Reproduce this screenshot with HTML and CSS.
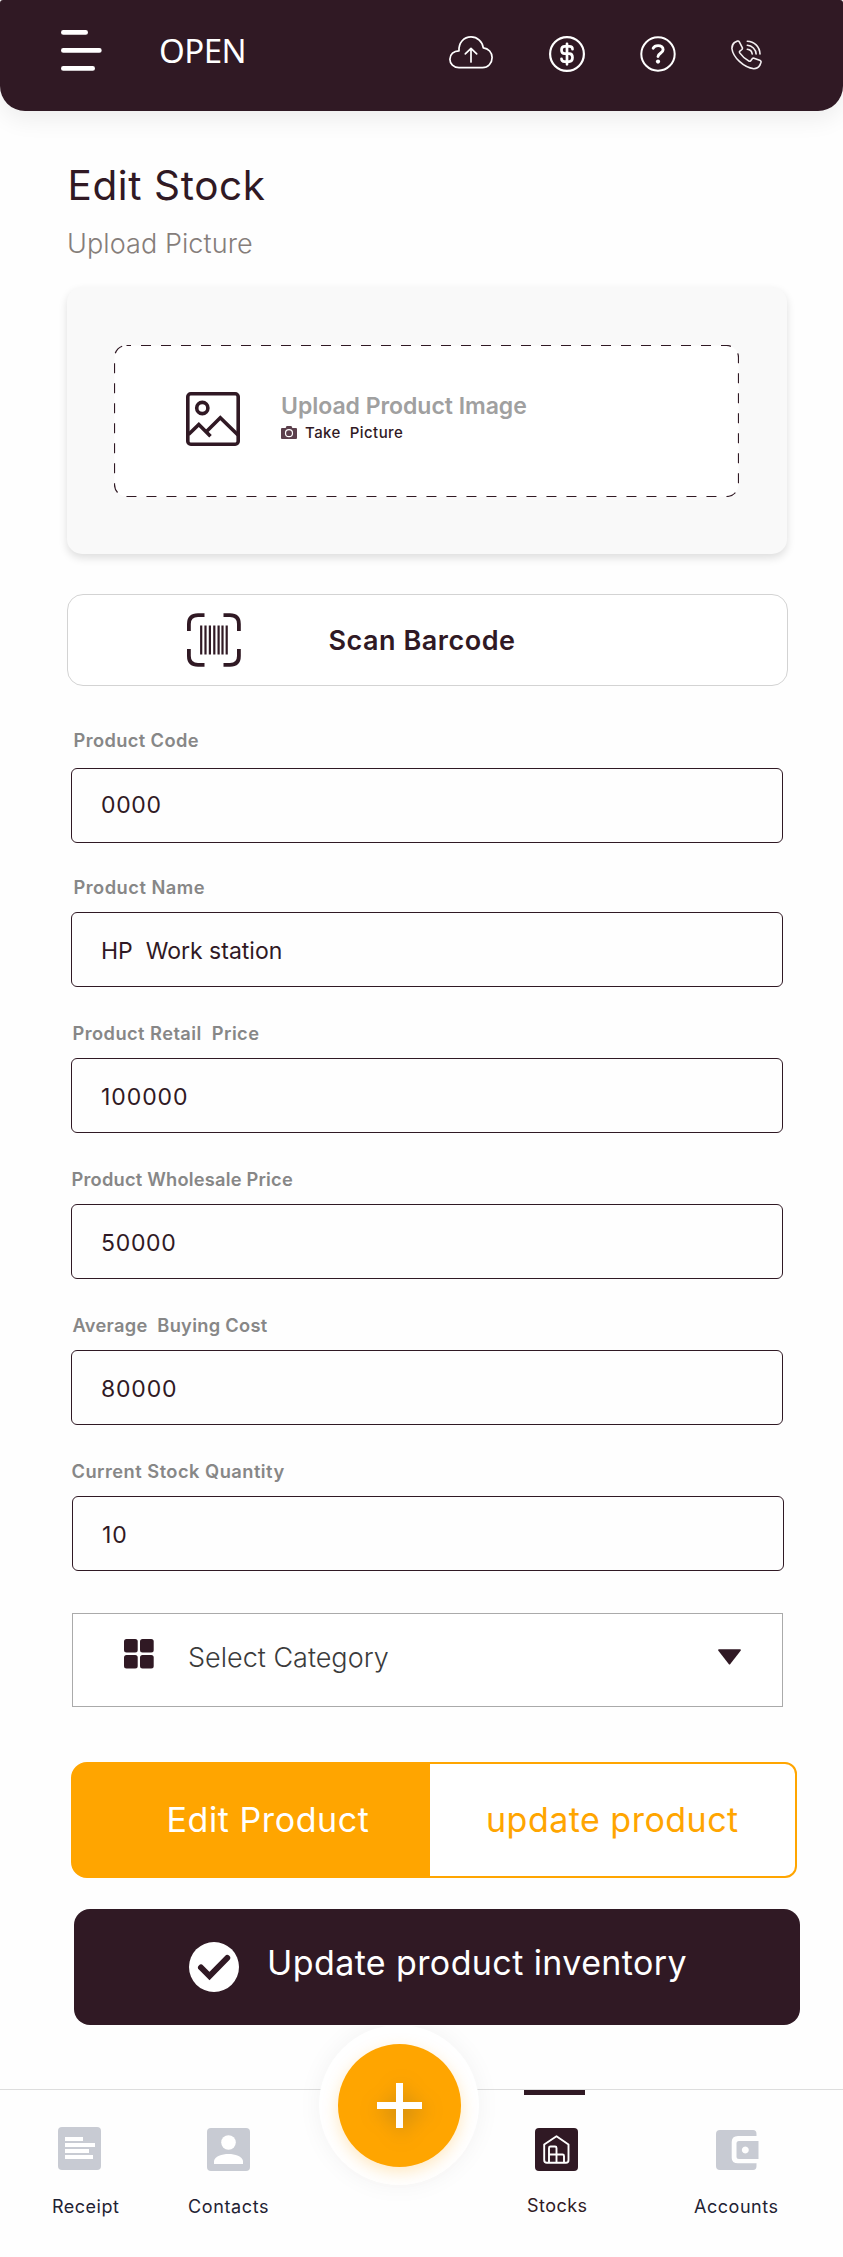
FILE: index.html
```html
<!DOCTYPE html>
<html lang="en">
<head>
<meta charset="utf-8">
<title>Edit Stock</title>
<link rel="stylesheet" href="styles.css">
</head>
<body>
<header class="topbar">
  <svg class="menu" width="41" height="41" viewBox="0 0 41 41" stroke="#fff" stroke-width="4.6" stroke-linecap="round"><path d="M2.3 2.4H24.7M2.3 20.4H38.4M2.3 38.4H31.7"/></svg>
  <span class="brand">OPEN</span>
  <nav class="tools">
    <svg class="t-cloud" width="44" height="33" viewBox="0 0 44 33" fill="none" stroke="#fff" stroke-width="1.7" stroke-linecap="round" stroke-linejoin="round"><path d="M10 31.7C4.500 31.700 .9 27.800 .9 23.200C.9 18.300 4.800 14.800 10 14.800C9.500 6.500 15 .9 22 .9C28.500 .9 33.500 5.600 34.300 11.800C39.500 12.300 43.100 16.500 43.100 21.500C43.100 27.300 39 31.700 33.500 31.700Z"/><path d="M22 26V12.500M16.300 17.800L22 12.300L27.700 17.800"/></svg>
    <svg class="t-dollar" width="36" height="36" viewBox="0 0 36 36" fill="none" stroke="#fff"><circle cx="18" cy="18" r="16.900" stroke-width="2.200"/><path d="M23.500 13.200C23.500 11.300 22.100 10.400 20.300 10.400H15.800C13.700 10.400 12.500 11.800 12.500 14S13.700 17.700 15.800 17.700H20.200C22.300 17.700 23.500 19.200 23.500 21.600S22.300 25.600 20.200 25.600H15.500C13.600 25.600 12.500 24.600 12.500 22.800M18 7.800V28.300" stroke-width="2.700" stroke-linecap="round"/></svg>
    <svg class="t-help" width="36" height="36" viewBox="0 0 36 36" fill="none" stroke="#fff"><circle cx="18" cy="18" r="16.700" stroke-width="2"/><path d="M13.200 12.200C14.100 10.300 15.900 9.600 18.100 9.600C21 9.600 23.100 11.200 23.100 13.700C23.100 17.200 18 17.200 18 20.500" stroke-width="2.900" stroke-linecap="round"/><circle cx="18" cy="25.600" r="2.100" fill="#fff" stroke="none"/></svg>
    <svg class="t-phone" width="31" height="30" viewBox="0 0 31 30" fill="none" stroke="#f4f0f2" stroke-width="1.600" stroke-linecap="round" stroke-linejoin="round"><path d="M3.500 2.500L6.500 1Q7.700 .7 8.300 1.900L11.300 7.600Q11.700 8.700 10.900 9.500L8.600 11.400Q8.300 12.100 8.700 12.900C11.200 16.500 14.400 19.300 18.200 21.200Q19 21.500 19.600 20.900L21.400 18.600Q22 17.900 23 18.200L29.300 20.600Q30.300 21.200 30 22.300L29 25Q27 28.700 22.800 28.700C12.500 27.500 2 17.300 .9 8.500Q.9 4.500 3.500 2.500Z"/><path d="M16.300 1.200C23.200 1.400 28.700 6.600 29 14M16.300 5.300C21 5.500 24.900 9.400 25.100 14M16.300 9.300C19.100 9.600 20.900 11.500 21.200 14"/></svg>
  </nav>
</header>

<main class="page">
  <h1 class="title">Edit Stock</h1>
  <p class="subtitle">Upload Picture</p>

  <section class="upload">
    <div class="drop">
      <svg class="dash" width="625" height="152" viewBox="0 0 625 152"><rect x=".5" y=".5" width="624" height="151" rx="12" fill="#fff" stroke="#301924" stroke-width="1.200" stroke-dasharray="10 10" stroke-dashoffset="5.500"/></svg>
      <svg class="pic" width="54" height="54" viewBox="0 0 54 54" fill="none" stroke="#301924" stroke-width="3.600"><rect x="1.800" y="1.800" width="50.400" height="50.400" rx="3"/><circle cx="16.300" cy="16" r="5.600"/><path d="M2.500 42.500L12.800 32.500L24.500 44.300M20.500 39.500L34.300 25.800L52 43"/></svg>
      <div class="drop-text">
        <span class="drop-title">Upload Product Image</span>
        <span class="take"><svg width="16" height="13" viewBox="0 0 16 13"><path fill="#5b3f4c" d="M1 2H4.600L5.600 0H10.400L11.400 2H15Q16 2 16 3V12Q16 13 15 13H1Q0 13 0 12V3Q0 2 1 2Z"/><circle cx="8" cy="7.200" r="3.500" fill="none" stroke="#fff" stroke-width="1.200"/></svg><span class="take-text">Take  Picture</span></span>
      </div>
    </div>
  </section>

  <section class="scan">
    <svg width="54" height="54" viewBox="0 0 54 54" fill="none" stroke="#301924"><path stroke-width="3.800" d="M1.900 18V11Q1.900 2.200 11 2.200H17.500M36.500 2.200H43Q51.900 2.200 51.900 11V18M51.900 36V43Q51.900 51.800 43 51.800H36.500M17.500 51.800H11Q1.900 51.800 1.900 43V36"/><path stroke-width="2.200" d="M14.200 12.500V41.500M18.500 12.500V41.500M22.900 12.500V41.500M27.300 12.500V41.500M31.600 12.500V41.500M35.500 12.500V41.500M39.700 12.500V41.500"/></svg>
    <span class="scan-text">Scan Barcode</span>
  </section>

  <form class="fields">
    <div class="field code"><label>Product Code</label><div class="box">0000</div></div>
    <div class="field name"><label>Product Name</label><div class="box">HP  Work station</div></div>
    <div class="field retail"><label>Product Retail  Price</label><div class="box">100000</div></div>
    <div class="field wholesale"><label>Product Wholesale Price</label><div class="box">50000</div></div>
    <div class="field cost"><label>Average  Buying Cost</label><div class="box">80000</div></div>
    <div class="field quantity"><label>Current Stock Quantity</label><div class="box">10</div></div>
  </form>

  <div class="select">
    <svg class="grid" width="30" height="30" viewBox="0 0 30 30" fill="#301924"><rect width="13.700" height="13.500" rx="2.500"/><rect x="16" width="13.700" height="13.500" rx="2.500"/><rect y="16" width="13.700" height="13.500" rx="2.500"/><rect x="16" y="16" width="13.700" height="13.500" rx="2.500"/></svg>
    <span class="select-text">Select Category</span>
    <svg class="caret" width="23" height="16" viewBox="0 0 23 16"><path fill="#301924" d="M1 .3H22Q23.400 .3 22.600 1.800L12.300 15Q11.500 16 10.700 15L.4 1.800Q-.4 .3 1 .3Z"/></svg>
  </div>

  <div class="split">
    <div class="split-a">Edit Product</div>
    <div class="split-b">update product</div>
  </div>

  <div class="inventory">
    <svg width="50" height="50" viewBox="0 0 50 50"><circle cx="25" cy="25" r="25" fill="#fff"/><path d="M12 25.500L20.500 34L38.200 16" fill="none" stroke="#301924" stroke-width="6" stroke-linecap="round"/></svg>
    <span class="inventory-text">Update product inventory</span>
  </div>
</main>

<footer class="tabs">
  <div class="tab receipt"><svg width="43" height="43" viewBox="0 0 43 43"><rect width="43" height="43" rx="4" fill="#c8cbd3"/><path fill="#fff" d="M7 10H25V14H7ZM7 16H37V20H7ZM7 22H31V26H7ZM7 28H35V32H7Z"/></svg><span>Receipt</span></div>
  <div class="tab contacts"><svg width="43" height="43" viewBox="0 0 43 43"><rect width="43" height="43" rx="4" fill="#c8cbd3"/><circle cx="21.500" cy="14.500" r="7.300" fill="#fff"/><path fill="#fff" d="M7 36V33C7.500 28.500 15 26 21.500 26S35.500 28.500 36 33V36Z"/></svg><span>Contacts</span></div>
  <div class="tab stocks"><svg width="43" height="43" viewBox="0 0 43 43"><rect width="43" height="43" rx="4" fill="#301924"/><path fill="none" stroke="#fff" stroke-width="1.900" stroke-linejoin="round" d="M9.200 16.500L21.500 8.300L33.500 16.500V32Q33.500 34.800 31 34.800H12Q9.200 34.800 9.200 32ZM14 34.800V20Q14 18.500 15.500 18.500H20Q21.500 18.500 21.500 20V34.800M14 26.500H27.500Q29 26.500 29 28V34.800"/></svg><span>Stocks</span></div>
  <div class="tab accounts"><svg width="43" height="40" viewBox="0 0 43 40"><path fill="#c8cbd3" d="M4 0H37Q40.500 0 40.500 4V6H22Q15.700 6 15.700 12V28Q15.700 33.300 22 33.300H40.500V36Q40.500 40 37 40H4Q0 40 0 36V4Q0 0 4 0Z"/><path fill="#c8cbd3" fill-rule="evenodd" d="M23 11H42.500V29H23Q20.500 29 20.500 26.500V13.500Q20.500 11 23 11ZM29.300 16.500A3.500 3.500 0 1 0 29.310 16.500Z"/></svg><span>Accounts</span></div>
  <div class="fab"><div class="fab-core"><svg width="45" height="45" viewBox="0 0 45 45"><path fill="#fff" d="M19 0H26V19H45V26H26V45H19V26H0V19H19Z"/></svg></div></div>
</footer>
</body>
</html>
```
FILE: styles.css
```css
* { box-sizing: border-box; }
body { margin: 0; width: 843px; background: #fefefe; color: #301924; font-family: Inter, "Liberation Sans", sans-serif; }
svg { display: block; flex: none; }

/* Header */
.topbar { display: flex; align-items: flex-start; height: 111px; padding: 0 81px 0 61px; background: #301924; border-radius: 3px 3px 25px 25px; box-shadow: 0 8px 24px rgba(0, 0, 0, .07); }
.menu { margin-top: 30px; }
.brand { width: 100px; margin: 28px 0 0 57px; font: 400 33px/46px "Noto Sans", sans-serif; letter-spacing: -.5px; color: #fff; white-space: nowrap; }
.tools { display: flex; margin-left: auto; }
.t-cloud { margin-top: 36px; }
.t-dollar { margin: 36px 0 0 56px; }
.t-help { margin: 36px 0 0 55px; }
.t-phone { margin: 40px 0 0 55px; }

/* Headings */
.page { padding: 50px 43px 0 67px; }
.title { margin: 0 0 0 .5px; font-size: 40.5px; font-weight: 400; line-height: 50px; letter-spacing: .6px; }
.subtitle { margin: 16px 0 0; font-size: 27px; font-weight: 300; line-height: 34px; letter-spacing: .08px; color: #857d7a; }

/* Image upload */
.upload { width: 720px; height: 267px; margin-top: 26px; padding: 58px 0 0 47px; background: #f9f9f9; border-radius: 15px; box-shadow: 0 4px 8px rgba(0, 0, 0, .13); }
.drop { position: relative; display: flex; width: 625px; height: 152px; padding: 47px 0 0 72px; }
.dash { position: absolute; inset: 0; }
.pic, .drop-text { position: relative; }
.drop-text { display: flex; flex-direction: column; margin-left: 41px; }
.drop-title { font-size: 23px; line-height: 28px; font-weight: 600; letter-spacing: -.03px; color: #a0a0a0; white-space: pre; }
.take { display: flex; align-items: center; height: 18px; margin-top: 3px; }
.take-text { margin-left: 8px; font-size: 15px; font-weight: 500; letter-spacing: .44px; white-space: pre; }

/* Barcode */
.scan { display: flex; width: 721px; height: 92px; margin-top: 40px; padding: 18px 0 0 119px; border: 1px solid #d3d3d3; border-radius: 16px; background: #fff; }
.scan-text { margin: 10px 0 0 87.5px; font-size: 27px; line-height: 36px; font-weight: 600; letter-spacing: .52px; white-space: pre; }

/* Form fields */
.fields { margin-top: 42px; padding-left: 4px; }
.field { margin-bottom: 34px; }
.field label { display: block; margin: 0 0 13px 2.5px; font-size: 18.3px; line-height: 24px; font-weight: 600; color: #878787; white-space: pre; }
.box { width: 712px; height: 75px; padding-left: 29px; border: 1px solid #301924; border-radius: 6px; font-size: 23px; line-height: 76px; font-weight: 400; white-space: pre; }
.code { margin-bottom: 32px; }
.code label { margin-bottom: 16px; letter-spacing: .37px; }
.code .box { line-height: 72px; letter-spacing: .66px; }
.name label { letter-spacing: .48px; }
.name .box { letter-spacing: 0; }
.retail label { margin-left: 1.5px; letter-spacing: .43px; }
.retail .box { letter-spacing: .92px; }
.wholesale label { margin-left: .5px; letter-spacing: .2px; }
.wholesale .box { letter-spacing: .7px; }
.cost label { margin-left: 1.5px; letter-spacing: .28px; }
.cost .box { letter-spacing: .81px; }
.quantity { margin-bottom: 0; }
.quantity label { margin-left: .5px; letter-spacing: .47px; }
.quantity .box { margin-left: 1px; letter-spacing: 1px; }

/* Category select */
.select { display: flex; width: 711px; height: 94px; margin: 42px 0 0 5px; padding: 25px 41px 0 51px; border: 1px solid #aaa; background: #fff; }
.select-text { margin: 1px 0 0 34px; font-size: 27px; line-height: 36px; font-weight: 300; color: #3b3b3b; white-space: pre; }
.caret { margin: 10px 0 0 auto; }

/* Actions */
.split { display: flex; width: 726px; height: 116px; margin: 55px 0 0 4px; border: 2px solid #ffa500; border-radius: 16px 12px 12px 16px; background: #ffa500; font-size: 34px; line-height: 66px; white-space: pre; }
.split-a { width: 357px; padding: 23px 0 0 93.5px; letter-spacing: .58px; color: #fff; }
.split-b { flex: 1; padding: 23px 0 0 56px; letter-spacing: .48px; color: #ffa500; background: #fff; border-radius: 0 10px 10px 0; }
.inventory { display: flex; width: 726px; height: 116px; margin: 31px 0 0 7px; padding: 33px 0 0 115px; border-radius: 16px; background: #301924; color: #fff; font-size: 34px; }
.inventory-text { margin: -1px 0 0 28px; line-height: 44px; letter-spacing: .4px; white-space: pre; }

/* Bottom tabs */
.tabs { position: relative; display: flex; align-items: flex-start; height: 168px; margin-top: 64px; padding-left: 50px; border-top: 1px solid #ddd; }
.tab { display: flex; flex-direction: column; font-size: 18px; line-height: 24px; color: #1f2233; white-space: pre; }
.tab span { margin-top: 25px; }
.receipt { width: 138px; padding-top: 37px; letter-spacing: .5px; }
.receipt svg { margin-left: 8px; }
.receipt span { margin-left: 2px; }
.contacts { width: 336px; padding-top: 38px; letter-spacing: .62px; }
.contacts svg { margin-left: 19px; }
.contacts span { margin-top: 24px; }
.stocks { position: relative; width: 170px; padding-top: 38px; letter-spacing: .46px; color: #301924; }
.stocks::before { content: ""; position: absolute; top: 0; left: 0; width: 61px; height: 5px; background: #301924; }
.stocks svg { margin-left: 11px; }
.stocks span { margin: 23px 0 0 3px; }
.accounts { padding-top: 40px; letter-spacing: .53px; }
.accounts svg { margin-left: 22px; }
.fab { position: absolute; left: 319px; top: -65px; display: grid; place-items: center; width: 160px; height: 160px; border-radius: 50%; background: #fff; box-shadow: 0 0 24px rgba(0, 0, 0, .05); clip-path: inset(1px -40px -40px -40px); }
.fab-core { display: grid; place-items: center; width: 123px; height: 123px; border-radius: 50%; background: #ffa500; box-shadow: 0 5px 16px rgba(255, 165, 0, .25); }
.fab-core svg { filter: drop-shadow(2px 5px 10px rgba(90, 85, 60, .4)); }
```
